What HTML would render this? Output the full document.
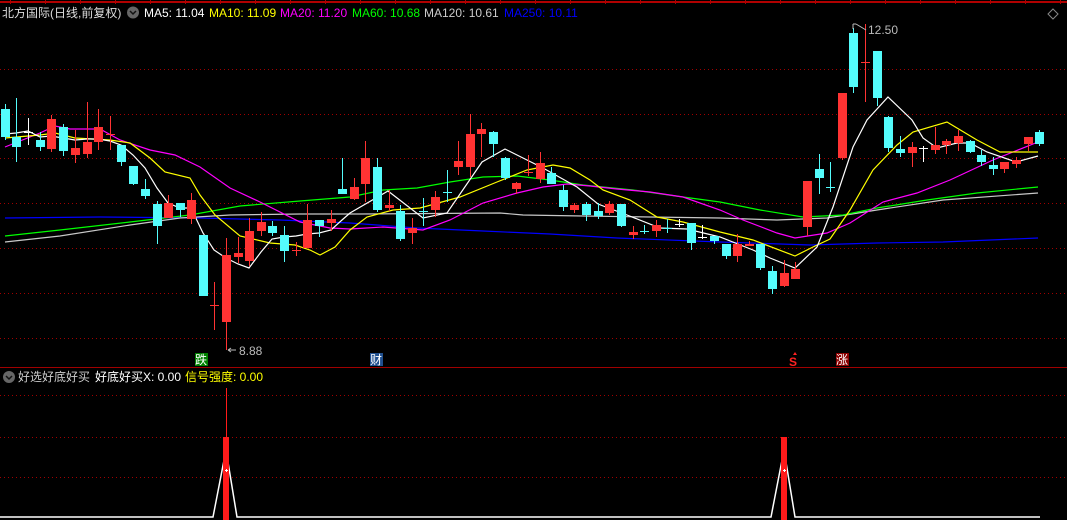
<!DOCTYPE html>
<html><head><meta charset="utf-8"><style>
html,body{margin:0;padding:0;background:#000;width:1067px;height:520px;overflow:hidden}
svg{display:block}
text{font-family:"Liberation Sans","Noto Sans CJK SC",sans-serif;font-size:12px}
</style></head><body>
<svg id="s" width="1067" height="520" xmlns="http://www.w3.org/2000/svg">
<rect width="1067" height="520" fill="#000"/>
<g id="grid"></g>
<g id="ma" fill="none" stroke-width="1.2"></g>
<g id="cd" shape-rendering="crispEdges"></g>
<line x1="0" y1="367.5" x2="1067" y2="367.5" stroke="#a00000"/>
<line x1="0" y1="2" x2="1067" y2="2" stroke="#b00000" stroke-width="2"/>
<text x="2" y="17" fill="#ddd">北方国际(日线,前复权)</text>
<circle cx="133" cy="12.5" r="6" fill="#666"/>
<path d="M130 11 l3 3 l3 -3" stroke="#111" stroke-width="1.5" fill="none"/>
<text x="144" y="17" fill="#fff">MA5: 11.04</text>
<text x="209" y="17" fill="#ffff00">MA10: 11.09</text>
<text x="280" y="17" fill="#ff00ff">MA20: 11.20</text>
<text x="352" y="17" fill="#00ff00">MA60: 10.68</text>
<text x="424" y="17" fill="#ccc">MA120: 10.61</text>
<text x="504" y="17" fill="#0000ff">MA250: 10.11</text>
<path d="M1053 9 l5 5 l-5 5 l-5 -5z" stroke="#888" fill="none"/>
<text x="239" y="355" fill="#bbb">8.88</text>
<path d="M236 350 h-8 m0 0 l3 -2 m-3 2 l3 2" stroke="#bbb" fill="none"/>
<text x="868" y="34" fill="#bbb">12.50</text>
<path d="M853 24 v5 M853 24 h3 M856 24 l10 6" stroke="#bbb" fill="none"/>
<rect x="195" y="353" width="13" height="13" fill="#008000"/>
<text x="195" y="364" fill="#fff">跌</text>
<rect x="370" y="353" width="13" height="13" fill="#1f4f8f"/>
<text x="370" y="364" fill="#fff">财</text>
<path d="M793 355 l2 -3 l2 3z" fill="#f22"/>
<text x="789" y="366" fill="#f22" style="font-weight:bold">S</text>
<rect x="836" y="353" width="13" height="13" fill="#8b0000"/>
<text x="836" y="364" fill="#fff">涨</text>
<circle cx="9" cy="377" r="6" fill="#666"/>
<path d="M6 376 l3 3 l3 -3" stroke="#111" stroke-width="1.5" fill="none"/>
<text x="18" y="381" fill="#ccc">好选好底好买</text>
<text x="95" y="381" fill="#fff">好底好买X: 0.00</text>
<text x="185" y="381" fill="#ffff00">信号强度: 0.00</text>
<g id="bot"></g>
</svg>
<script>
var NS="http://www.w3.org/2000/svg";
function el(p,t,a){var e=document.createElementNS(NS,t);for(var k in a)e.setAttribute(k,a[k]);p.appendChild(e);return e;}
var G=document.getElementById('grid');
[69,114,158,203,248,293,338,395,437,477].forEach(function(y){el(G,'line',{x1:0,x2:1067,y1:y+.5,y2:y+.5,stroke:'#a00000','stroke-dasharray':'1 3'});});
var s=document.getElementById('s');
for(var x=10;x<1067;x+=35)el(s,'line',{x1:x+.5,x2:x+.5,y1:0,y2:4,stroke:'#b00000'});
var C=[
[5,'c',109,137,104,140],[16,'c',137,147,98,162],[28,'w',132,132,118,145],[40,'c',140,147,132,151],[51,'r',119,149,115,152],
[63,'c',127,151,124,156],[75,'r',148,155,130,163],[87,'r',142,154,102,158],[98,'r',127,142,109,150],[110,'rd',134,134,116,150],
[121,'c',145,162,145,166],[133,'c',166,184,166,185],[145,'c',189,196,179,199],[157,'c',204,226,201,244],[168,'r',203,218,195,218],
[180,'c',203,210,203,217],[191,'r',200,219,193,224],[203,'c',235,296,235,296],[214,'rd',305,305,282,330],[226,'r',255,322,238,350],
[238,'r',253,257,237,263],[249,'r',231,261,218,266],[261,'r',222,231,212,236],[272,'c',226,233,221,236],[284,'c',235,251,226,262],
[296,'rd',250,250,242,256],[307,'r',220,248,204,248],[319,'c',220,226,220,237],[331,'r',219,223,210,231],[342,'c',189,194,158,194],
[354,'r',187,199,178,200],[365,'r',158,184,141,202],[377,'c',167,210,158,212],[389,'r',205,208,190,211],[400,'c',211,239,205,241],
[412,'r',228,233,218,244],[423,'cd',211,211,198,226],[435,'r',197,210,191,217],[447,'cd',192,192,170,202],[458,'r',161,167,141,175],
[470,'r',134,167,114,177],[481,'r',129,134,123,157],[493,'c',132,144,131,157],[505,'c',158,178,157,180],[516,'r',183,189,182,194],
[528,'rd',172,172,155,176],[540,'r',163,179,152,183],[551,'c',173,184,167,184],[563,'c',190,207,185,211],[574,'r',205,210,203,213],
[586,'c',204,215,202,221],[598,'c',211,216,203,219],[609,'r',204,213,201,215],[621,'c',204,226,204,227],[633,'r',232,235,226,239],
[644,'cd',231,231,225,234],[656,'r',225,231,220,237],[667,'cd',228,228,219,233],[679,'w',224,224,219,227],[691,'c',223,243,223,250],
[702,'w',237,237,225,239],[714,'c',236,241,236,244],[726,'c',244,256,244,259],[737,'r',244,256,234,262],[749,'rd',244,245,241,246],
[760,'c',244,268,244,270],[772,'c',271,289,266,294],[784,'r',273,286,260,287],[795,'r',269,279,262,279],[807,'r',181,227,181,236],
[819,'c',169,178,154,194],[830,'cd',187,187,162,192],[842,'r',93,158,93,160],[853,'c',33,87,28,93],[865,'rd',62,62,24,102],
[877,'c',51,98,51,106],[888,'c',117,148,116,152],[900,'c',149,153,136,157],[912,'r',147,153,142,167],[923,'w',148,148,146,162],
[935,'r',145,150,127,154],[946,'r',141,145,139,154],[958,'r',136,143,130,151],[970,'c',141,152,140,153],[981,'c',155,162,150,166],
[993,'c',165,169,157,175],[1004,'r',162,169,162,173],[1016,'r',160,164,157,168],[1028,'r',137,144,137,151],[1039,'c',132,144,130,146]];
var CD=document.getElementById('cd');
C.forEach(function(c){var x=c[0],t=c[1],col=t[0]=='c'?'#54fcfc':t[0]=='r'?'#ff3333':'#ffffff';
el(CD,'rect',{x:x,y:c[4],width:1,height:Math.max(1,c[5]-c[4]),fill:col});
if(t.length>1||t=='w'){el(CD,'rect',{x:x-4,y:c[2],width:9,height:Math.max(1,c[3]-c[2]+1),fill:col});}
else el(CD,'rect',{x:x-4,y:c[2],width:9,height:Math.max(1,c[3]-c[2]),fill:col});});
var M=document.getElementById('ma');
function pl(col,p){el(M,'polyline',{points:p,stroke:col});}
pl('#0000ff','5,218 100,217 200,218 280,220 350,223 417,228 483,231 550,234 617,238 720,242 810,245 877,243 943,242 1038,238');
pl('#c8c8c8','5,242 60,236 130,225 180,218 230,215 300,214 360,214 500,213 523,215 583,216 650,217 720,218 777,220 827,218 877,210 943,200 1038,193');
pl('#00ff00','5,236 60,230 130,222 190,215 240,206 300,201 350,197 383,190 417,188 450,182 483,177 517,176 550,180 583,185 633,190 683,197 720,202 760,210 803,217 843,215 877,208 927,200 977,193 1038,187');
pl('#ff00ff','5,147 40,133 55,126 70,129 100,129 120,140 150,150 175,155 200,167 230,188 260,202 300,222 330,228 350,229 383,227 423,230 450,220 483,203 517,193 543,187 567,184 590,186 617,189 650,192 683,197 720,210 743,220 777,233 795,238 827,233 850,223 883,202 917,193 950,180 993,160 1038,142');
pl('#ffff00','5,138 40,135 55,133 75,138 110,140 130,143 150,158 165,172 190,178 200,195 215,215 240,236 270,243 295,245 310,250 320,255 335,247 350,230 367,217 393,210 420,208 460,197 497,182 527,170 553,165 570,168 590,180 603,190 630,200 657,217 683,222 720,232 753,240 795,256 813,247 830,239 850,210 873,170 897,145 913,132 947,122 977,140 1000,152 1038,152');
pl('#ffffff','5,134 16,133 28,131 40,137 51,136 63,138 75,140 87,139 98,139 110,141 121,145 133,155 145,168 157,188 168,203 180,208 191,208 203,233 214,250 226,258 238,264 249,268 261,252 272,239 284,237 296,236 307,234 319,233 331,230 342,220 350,213 388,191 423,218 447,213 482,162 505,149 543,168 577,187 598,204 627,215 660,228 687,229 720,237 753,250 770,258 795,268 817,247 833,207 853,147 867,120 888,97 912,120 923,138 937,148 957,143 970,143 987,152 1016,162 1038,156');
var B=document.getElementById('bot');
el(B,'polyline',{points:'0,517 213,517 226,450 237,517 771,517 784,450 795,517 1040,517',stroke:'#fff',fill:'none','stroke-width':1.5});
[226,784].forEach(function(x){el(B,'rect',{x:x-3,y:437,width:6,height:83,fill:'#ff1a1a'});
el(B,'rect',{x:x-1,y:470,width:3,height:1,fill:'#fff'});el(B,'rect',{x:x,y:469,width:1,height:3,fill:'#fff'});});
el(B,'rect',{x:226,y:388,width:1,height:50,fill:'#ff1a1a'});
</script>
</body></html>
